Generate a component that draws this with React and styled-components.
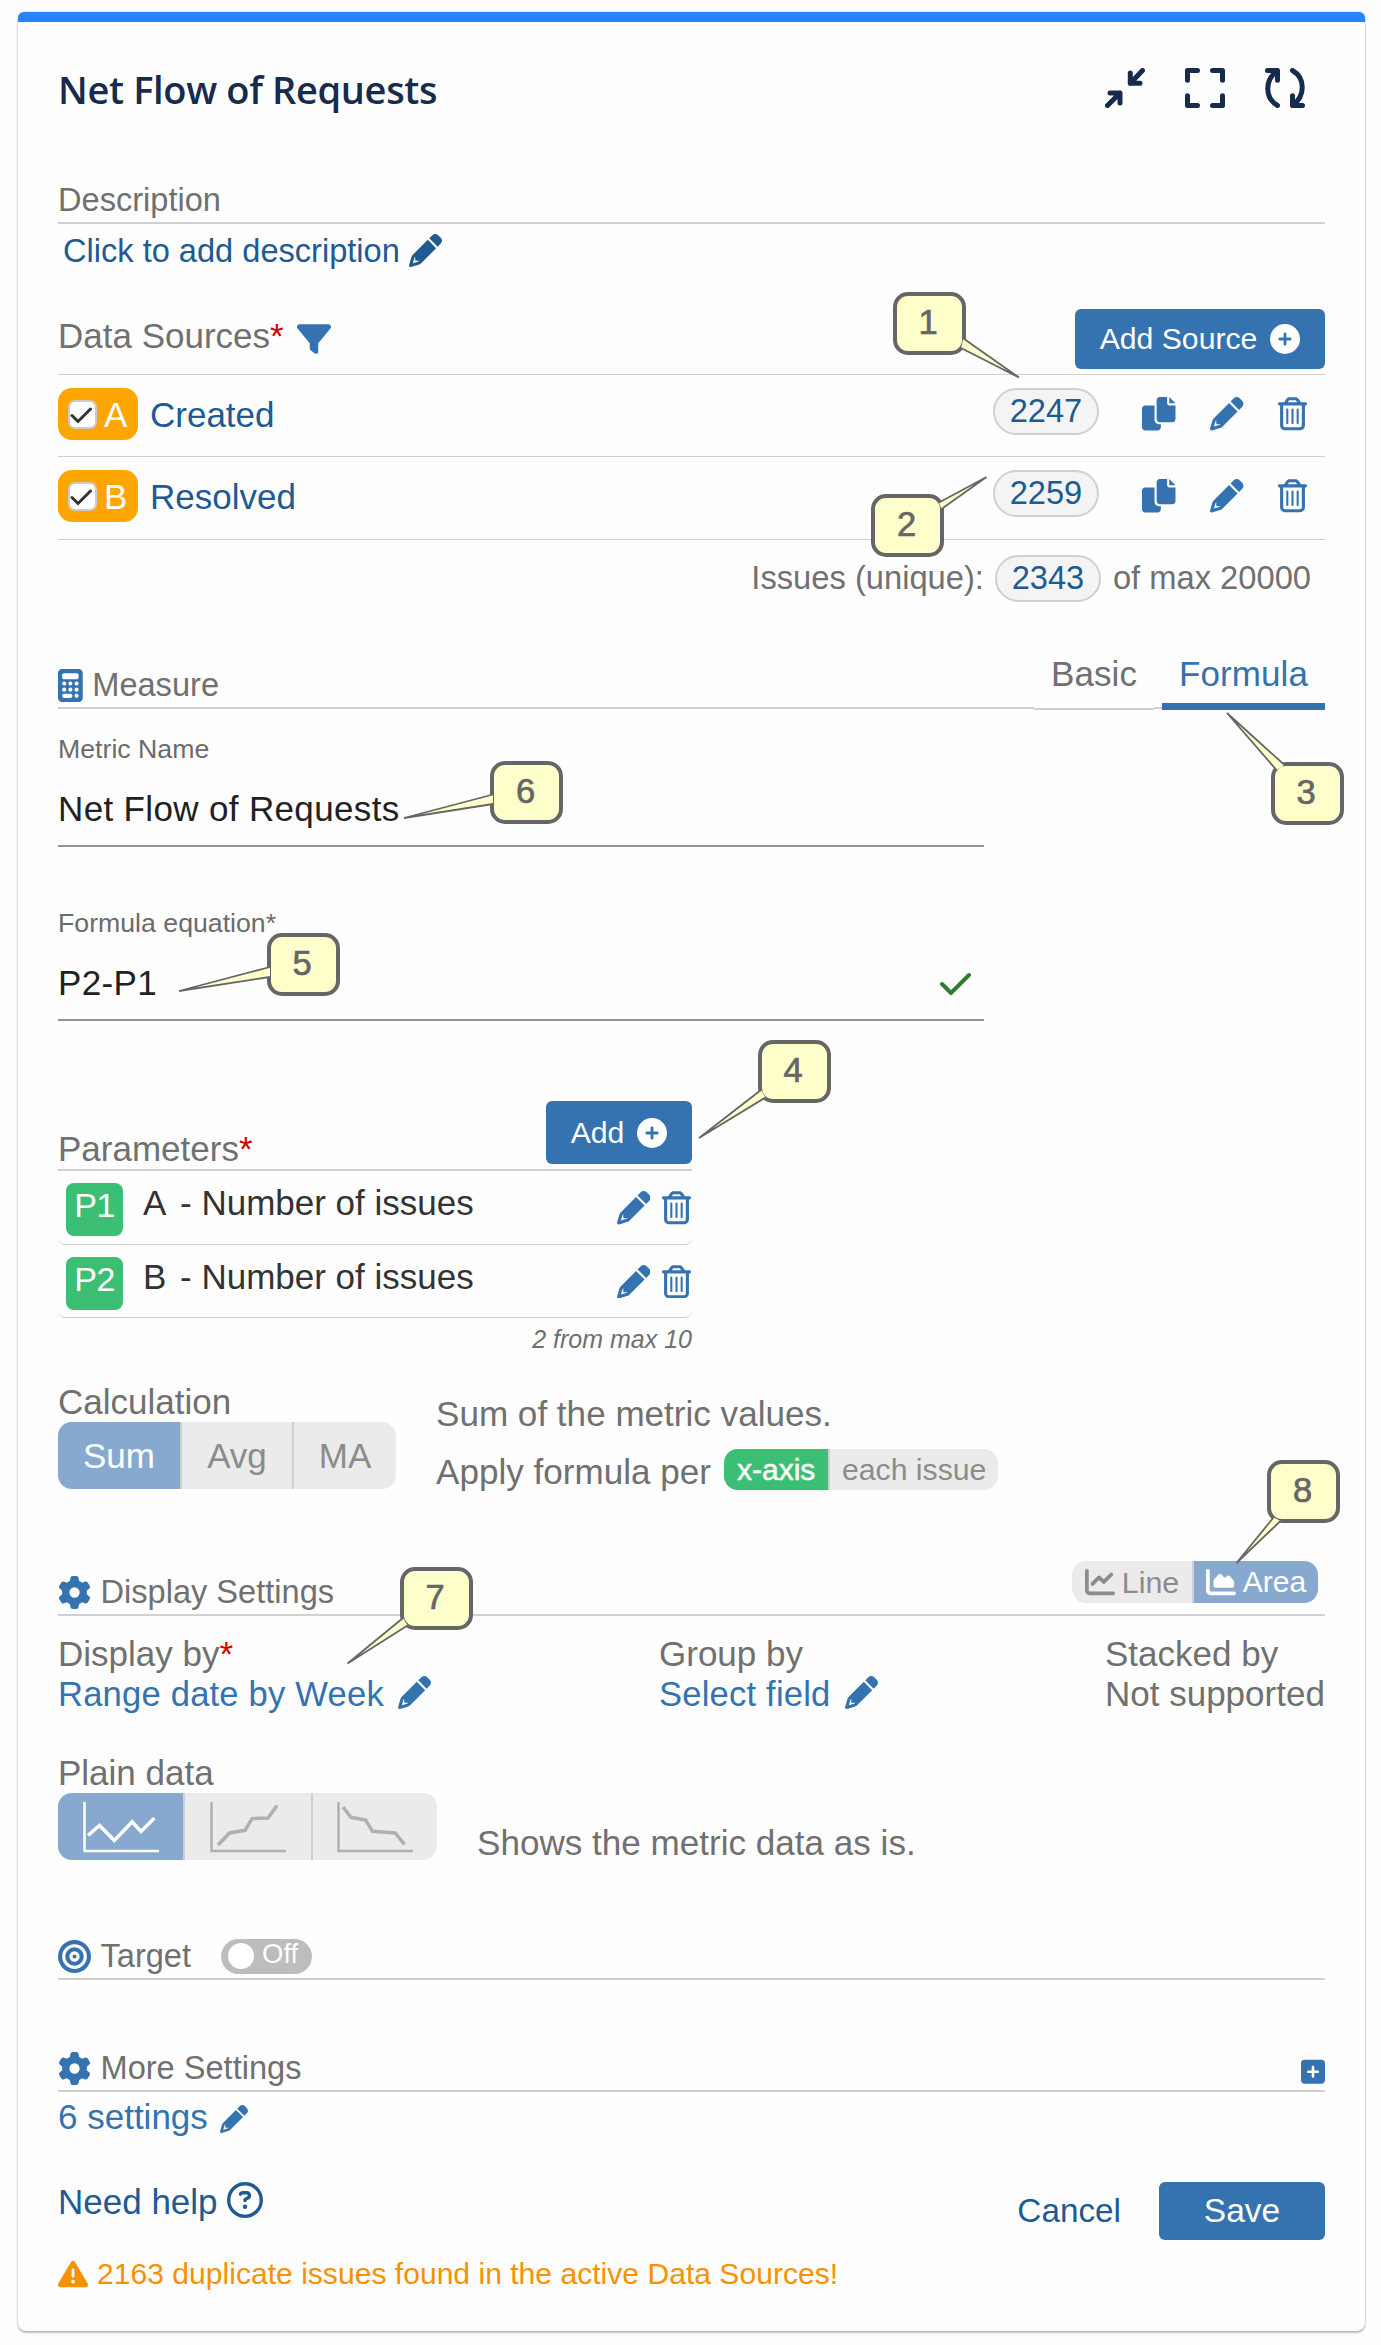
import React, { useState } from "react";
import styled, { createGlobalStyle, css } from "styled-components";
import {
  FaBullseye,
  FaCalculator,
  FaChartArea,
  FaChartLine,
  FaCirclePlus,
  FaFilter,
  FaGear,
  FaRegCircleQuestion,
  FaRegTrashCan,
  FaSquarePlus,
  FaTriangleExclamation,
} from "react-icons/fa6";

const GlobalStyle = createGlobalStyle`
  * {
    box-sizing: border-box;
  }

  body {
    margin: 0;
    background-color: #fefefe;
    font-family: "Liberation Sans", Arial, sans-serif;
    color: #707070;
  }

  svg {
    display: block;
    flex-shrink: 0;
  }
`;

const Page = styled.div`
  position: relative;
  width: 1381px;
  height: 2345px;
  padding: 12px 16px 0 18px;
  overflow: hidden;
`;

const Card = styled.div`
  height: 2319px;
  padding: 0 40px;
  border-top: 10px solid #2684ff;
  border-radius: 6px 6px 8px 8px;
  background-color: #fefefe;
  box-shadow: 0 2px 2px rgba(9, 30, 66, 0.25), 0 0 2px rgba(9, 30, 66, 0.31);
`;

const Header = styled.header`
  display: flex;
  align-items: center;
  justify-content: space-between;
  height: 131px;
`;

const Title = styled.h1`
  margin: 0;
  padding-top: 2px;
  font-family: "Open Sans", "Noto Sans", sans-serif;
  font-weight: 600;
  font-size: 38px;
  letter-spacing: -0.35px;
  color: #172b4d;
`;

const HeaderIcons = styled.div`
  display: flex;
  gap: 40px;
  padding-right: 20px;

  svg {
    width: 40px;
    height: 40px;
    fill: none;
    stroke: #172b4d;
    stroke-width: 5;
    stroke-linecap: round;
    stroke-linejoin: round;
  }
`;

const SectionHead = styled.div`
  display: flex;
  align-items: center;
  height: 46px;
  margin-top: ${(props) => props.$top || 0}px;
  border-bottom: 2px solid #d0d0d0;
  font-size: 32.6px;

  & > svg {
    margin-right: 9.5px;
    color: #3572b0;
  }
`;

const CalculatorIcon = styled(FaCalculator)`
  width: 24.75px;
  height: 33px;
`;

const ExpandIcon = styled(FaSquarePlus)`
  && {
    width: 24px;
    height: 27.5px;
    margin: 7px 0 0;
  }
`;

const TrashIcon = styled(FaRegTrashCan)`
  width: 29px;
  height: 33.5px;
`;

const Push = styled.div`
  flex: 1;
`;

const Label = styled.span`
  font-size: 35px;
  line-height: 40px;
  white-space: nowrap;

  em {
    font-style: normal;
    color: #d40000;
  }
`;

const DescriptionLink = styled.div`
  display: flex;
  align-items: center;
  gap: 9px;
  height: 53px;
  padding-left: 5px;
  font-size: 32.6px;
  color: #205a93;
`;

const SourcesHead = styled.div`
  display: flex;
  align-items: center;
  height: 98px;
  padding: 27px 0 0;
  border-bottom: 1px solid #d0d0d0;

  ${Label} {
    padding-bottom: 6px;
  }

  svg {
    color: #3572b0;
  }

  & > svg {
    margin-left: 13px;
  }
`;

const Button = styled.button`
  display: flex;
  align-items: center;
  justify-content: center;
  gap: 13px;
  width: ${(props) => props.$width}px;
  height: ${(props) => props.$height}px;
  padding: 0;
  border: 0;
  border-radius: 6px;
  background-color: #3572b0;
  color: #fff;
  font-family: inherit;
  font-size: ${(props) => props.$size || 30.2}px;

  && svg {
    color: #fff;
  }
`;

const SourceRow = styled.div`
  display: flex;
  align-items: flex-start;
  height: ${(props) => props.$height}px;
  padding-top: 13px;
  border-bottom: 1px solid #d0d0d0;
`;

const SourceBadge = styled.div`
  display: flex;
  align-items: center;
  gap: 7px;
  width: 80px;
  height: 52px;
  padding-left: 10px;
  border-radius: 14px;
  background-color: #ffa500;
  color: #fff;
  font-size: 35px;

  span {
    padding-top: 2px;
  }
`;

const CheckBox = styled.div`
  width: 29px;
  height: 29px;
  border: 2px solid #ccc;
  border-radius: 7px;
  background-color: #fff;

  svg {
    width: 25px;
    height: 25px;
    fill: none;
    stroke: #333;
    stroke-width: 3;
    stroke-linecap: round;
  }
`;

const SourceName = styled.div`
  flex: 1;
  padding-left: 12px;
  font-size: 35px;
  line-height: 53px;
  color: #205a93;
`;

const Pill = styled.div`
  width: 106px;
  height: 47px;
  border: 2px solid #d0d0d0;
  border-radius: 24px;
  background-color: #f4f4f4;
  color: #205a93;
  font-size: 32.6px;
  line-height: 41px;
  text-align: center;
`;

const RowIcons = styled.div`
  display: flex;
  gap: 34.5px;
  padding: 9px 18px 0 43px;
  color: #3572b0;
`;

const Total = styled.div`
  display: flex;
  justify-content: flex-end;
  height: 123px;
  padding: 15px 14px 0 0;
  font-size: 32.7px;
  line-height: 45px;

  ${Pill} {
    margin: 0 12px 0 11px;
  }
`;

const Tabs = styled.div`
  display: flex;
  align-self: flex-end;
  gap: 8px;
  margin-bottom: -3px;
`;

const Tab = styled.div`
  width: ${(props) => props.$width}px;
  height: 60px;
  border-bottom: 2px solid #d0d0d0;
  background-color: #fefefe;
  font-size: 35px;
  letter-spacing: 0.1px;
  line-height: 48px;
  text-align: center;

  ${(props) =>
    props.$active &&
    css`
      border-bottom: 7px solid #3572b0;
      color: #3572b0;
    `}
`;

const Field = styled.div`
  width: 926px;
  height: 138px;
  margin-top: ${(props) => props.$top || 0}px;
  padding-top: 25px;
  border-bottom: 2px solid #949494;
`;

const FieldLabel = styled.div`
  font-size: 26.7px;
  line-height: 30px;
  color: #6b6b6b;
`;

const FieldValue = styled.div`
  display: flex;
  align-items: center;
  justify-content: space-between;
  height: 72px;
  margin-top: 9px;
  padding-right: 13px;
  font-size: 35px;
  letter-spacing: 0.35px;
  color: #212121;
`;

const Params = styled.div`
  width: 634px;
`;

const ParamsHead = styled.div`
  display: flex;
  align-items: flex-end;
  justify-content: space-between;
  height: 150px;
  border-bottom: 2px solid #d0d0d0;

  ${Button} {
    margin-bottom: 5px;
  }
`;

const ParamRow = styled.div`
  display: flex;
  align-items: flex-start;
  height: 73.5px;
  padding: 12px 1px 0 8px;
  border-bottom: 1px solid #d0d0d0;
  border-radius: 0 0 7px 7px;
  font-size: 35px;
  line-height: 40px;
  color: #333;

  svg {
    margin-top: 8px;
    margin-left: 12px;
    color: #3572b0;
  }
`;

const ParamBadge = styled.div`
  width: 57px;
  height: 53px;
  border-radius: 8px;
  background-color: #3bbf74;
  color: #fff;
  font-size: 34px;
  letter-spacing: -0.5px;
  line-height: 44px;
  text-align: center;
`;

const ParamSource = styled.div`
  width: 37px;
  margin-left: 20px;
`;

const MaxNote = styled.div`
  height: 64px;
  font-size: 25px;
  font-style: italic;
  line-height: 43px;
  text-align: right;
`;

const Calculation = styled.div`
  display: flex;
  height: 188px;
`;

const Column = styled.div`
  display: flex;
  flex-direction: column;
  width: ${(props) => (props.$width ? props.$width + "px" : "auto")};
`;

const Group = styled.div`
  display: inline-flex;
  overflow: hidden;
  height: ${(props) => props.$height}px;
  border-radius: 14px;
  background-color: #ebebeb;
  color: #8c8c8c;
`;

const Segment = styled.div`
  display: flex;
  align-items: center;
  justify-content: center;
  gap: ${(props) => props.$gap || 0}px;
  width: ${(props) => props.$width}px;
  font-size: ${(props) => props.$size || 35}px;
  -webkit-text-stroke: ${(props) => (props.$bold ? "0.5px #fff" : "0")};

  & + & {
    border-left: 2px solid #d0d0d0;
  }

  ${(props) =>
    props.$active &&
    css`
      && {
        border-color: ${props.$active};
      }
      background-color: ${props.$active};
      color: #fff;
    `}
`;

const CalcText = styled.div`
  display: flex;
  align-items: center;
  height: 58px;
  font-size: 35.1px;
  white-space: nowrap;

  ${Group} {
    margin: -5px 0 0 13px;
  }
`;

const CalcTexts = styled.div`
  padding: 3px 0 0 40px;
`;

const ChartToggle = styled.div`
  align-self: flex-end;
  height: 42px;
  margin: 0 7px 11px 0;
`;

const FieldsRow = styled.div`
  display: flex;
  height: 98px;
  padding-top: 18px;
`;

const Value = styled.div`
  display: flex;
  align-items: center;
  gap: 14px;
  height: 40px;
  font-size: ${(props) => (props.$link ? 34.6 : 35)}px;
  letter-spacing: ${(props) => (props.$link ? 0.2 : 0)}px;
  white-space: nowrap;
  color: ${(props) => (props.$link ? "#3572b0" : "#707070")};

  svg {
    margin-top: -4px;
  }
`;

const PlainData = styled.div`
  display: flex;
  align-items: flex-end;
  height: 107px;
  margin-top: 39px;
`;

const PlainText = styled.div`
  padding-left: 40px;
  font-size: 35.1px;
  line-height: 34px;
`;

const MiniChart = styled.svg`
  width: 76px;
  height: 52px;
  fill: none;
  stroke: ${(props) => (props.$active ? "#fff" : "#b0b0b0")};
`;

const Switch = styled.div`
  display: flex;
  align-items: center;
  gap: 8px;
  width: 91px;
  height: 35px;
  margin-left: 30px;
  padding-left: 7px;
  border-radius: 18px;
  background-color: #bdbdbd;
  color: #fff;
  font-size: 27.5px;

  &::before {
    content: "";
    width: 26px;
    height: 26px;
    border-radius: 50%;
    background-color: #fff;
  }

  span {
    padding-bottom: 5px;
  }
`;

const MoreLink = styled.div`
  display: flex;
  align-items: center;
  gap: 12px;
  height: 49px;
  padding-top: 1px;
  font-size: 35px;
  color: #3572b0;

  svg {
    margin-top: 4px;
  }
`;

const Footer = styled.div`
  display: flex;
  align-items: flex-start;
  height: 58px;
  margin-top: 41px;
  color: #205a93;
  font-size: 35px;
  line-height: 40px;
`;

const HelpLink = styled.div`
  display: flex;
  gap: 9px;
`;

const Cancel = styled.div`
  margin-right: 38px;
  font-size: 33.3px;
  line-height: 57px;
`;

const Warning = styled.div`
  display: flex;
  align-items: center;
  gap: 9px;
  height: 40px;
  margin-top: 14px;
  font-size: 30.1px;
  color: #f79100;
`;

const CalloutBox = styled.div`
  position: absolute;
  left: ${(props) => props.$x}px;
  top: ${(props) => props.$y}px;
  width: 73px;
  height: 63px;
  padding-right: 2px;
  border: 4px solid #666;
  border-radius: 15px;
  background-color: #ffffcc;
  color: #666;
  font-size: 34.5px;
  line-height: 53px;
  text-align: center;
  -webkit-text-stroke: 0.7px #666;

  svg {
    position: absolute;
    left: -4px;
    top: -4px;
    width: 1px;
    height: 1px;
    overflow: visible;
  }
`;

const CopyIcon = ({ size }) => (
  <svg width={size} height={size} viewBox="0 0 512 512" fill="currentColor">
    <path d="M384 96V0H272c-26.5 0-48 21.5-48 48v288c0 26.5 21.5 48 48 48h192c26.5 0 48-21.5 48-48V128h-95.1C398.4 128 384 113.6 384 96zM416 0v96h96L416 0zM192 352V128H48c-26.5 0-48 21.5-48 48v288c0 26.5 21.5 48 48 48h192c26.5 0 48-21.5 48-48v-48h-32C220.7 416 192 387.3 192 352z" />
  </svg>
);

const PencilIcon = ({ size }) => (
  <svg width={size} height={size} viewBox="0 0 512 512" fill="currentColor">
    <path d="M421.7 220.3L188.5 453.4L154.6 419.5L158.1 416H112C103.2 416 96 408.8 96 400V353.9L92.5 357.4C87.8 362.2 84.3 368 82.4 374.4L59.4 452.6L137.6 429.6C144 427.7 149.8 424.2 154.6 419.5L188.5 453.4C178.1 463.8 165.2 471.5 151.1 475.6L30.8 511C22.400 513.500 13.200 511.200 7 504.900C.8 498.800-1.500 489.700 1 481.200L36.400 360.900C40.500 346.800 48.200 333.900 58.600 323.500L291.700 90.300L421.700 220.300zM492.700 58.700C517.700 83.700 517.700 124.300 492.700 149.300L444.300 197.700L314.300 67.700L362.700 19.300C387.700-5.700 428.300-5.700 453.300 19.300L492.700 58.700z" />
  </svg>
);

// p = [base1, base2, tip], relative to the top left corner of the box
const Callout = ({ n, x, y, p }) => (
  <CalloutBox $x={x} $y={y}>
    <svg>
      <path d={`M${p[0]} L${p[2]} L${p[1]}`} fill="#ffffcc" stroke="#666" strokeWidth="1.8" strokeLinejoin="bevel" />
    </svg>
    {n}
  </CalloutBox>
);

const sources = [
  { id: "A", name: "Created", count: 2247, height: 82 },
  { id: "B", name: "Resolved", count: 2259, height: 83 },
];

const params = [
  { id: "P1", source: "A", name: "Number of issues" },
  { id: "P2", source: "B", name: "Number of issues" },
];

const charts = [
  { width: 125, line: "5,34.5 16.5,24.5 31.3,39.5 49.2,20.8 58,30.5 71.5,17" },
  { width: 128, line: "8,44 19.5,32 35,29.3 42,17.7 58,17 67,4.5" },
  { width: 126, line: "6,6 14,16.3 28.7,19 35.5,30.3 58.2,32 67.5,43.5" },
];

const callouts = [
  { n: 1, x: 892.5, y: 291.5, p: ["70.5,46.5", "68,56", "126,85.5"] },
  { n: 2, x: 871, y: 493.5, p: ["68,8.5", "70.5,15", "115.5,-17"] },
  { n: 3, x: 1270.5, y: 761.5, p: ["5.5,8", "13.5,3", "-44,-49"] },
  { n: 4, x: 757.5, y: 1039.5, p: ["3,50", "7.5,57.5", "-59,98"] },
  { n: 5, x: 266.5, y: 933, p: ["3,34", "3,44", "-88,58"] },
  { n: 6, x: 490, y: 760.5, p: ["3,33.5", "3,43", "-86,57"] },
  { n: 7, x: 399.5, y: 1567, p: ["3,51", "7.5,58.5", "-52.5,96.5"] },
  { n: 8, x: 1267, y: 1459.5, p: ["6.5,57.5", "13.5,61", "-30.5,103"] },
];

const App = () => {
  const [tab, setTab] = useState("Formula");
  const [calc, setCalc] = useState("Sum");
  const [plain, setPlain] = useState(0);

  return (
    <Page>
      <GlobalStyle />
      <Card>
        <Header>
          <Title>Net Flow of Requests</Title>
          <HeaderIcons>
            <svg viewBox="0 0 40 40">
              <path d="M37.5 2.5L25.3 15.3M25.3 5V15.3H35M2.5 37.5L15 25M5 25H15V35" />
            </svg>
            <svg viewBox="0 0 40 40">
              <path d="M2.5 12.2V2.5H12.5M27.5 2.5H37.5V12.2M37.5 27.8V37.5H27.5M12.5 37.5H2.5V27.8" />
            </svg>
            <svg viewBox="0 0 40 40">
              <path d="M2.5 2.5H12.5V12.2M12.5 2.5C-0.5 12-0.5 30 12.5 37.5M27.5 2.5C40.5 10 40.5 28 27.5 37.5M27.5 27.8V37.5H37.5" />
            </svg>
          </HeaderIcons>
        </Header>

        <SectionHead $top={25}>Description</SectionHead>
        <DescriptionLink>
          Click to add description
          <PencilIcon size={33} />
        </DescriptionLink>

        <SourcesHead>
          <Label>
            Data Sources<em>*</em>
          </Label>
          <FaFilter size={34} />
          <Push />
          <Button $width={250} $height={60}>
            Add Source <FaCirclePlus size={30} />
          </Button>
        </SourcesHead>
        {sources.map((v) => (
          <SourceRow key={v.id} $height={v.height}>
            <SourceBadge>
              <CheckBox>
                <svg viewBox="0 0 25 25">
                  <path d="M2 13.5L8 19.5L20.5 7" />
                </svg>
              </CheckBox>
              <span>{v.id}</span>
            </SourceBadge>
            <SourceName>{v.name}</SourceName>
            <Pill>{v.count}</Pill>
            <RowIcons>
              <CopyIcon size={33.5} />
              <PencilIcon size={33.5} />
              <TrashIcon />
            </RowIcons>
          </SourceRow>
        ))}
        <Total>
          Issues (unique):
          <Pill>2343</Pill>
          of max 20000
        </Total>

        <SectionHead>
          <CalculatorIcon />
          Measure
          <Push />
          <Tabs>
            <Tab $width={120} $active={tab === "Basic"} onClick={() => setTab("Basic")}>
              Basic
            </Tab>
            <Tab $width={163} $active={tab === "Formula"} onClick={() => setTab("Formula")}>
              Formula
            </Tab>
          </Tabs>
        </SectionHead>

        <Field>
          <FieldLabel>Metric Name</FieldLabel>
          <FieldValue>Net Flow of Requests</FieldValue>
        </Field>
        <Field $top={36}>
          <FieldLabel>Formula equation*</FieldLabel>
          <FieldValue>
            P2-P1
            <svg width="31" height="23" viewBox="0 0 31 23" fill="none" stroke="#2e7d32" strokeWidth="4" strokeLinecap="round">
              <path d="M2 12L11 21L29 3" />
            </svg>
          </FieldValue>
        </Field>

        <Params>
          <ParamsHead>
            <Label>
              Parameters<em>*</em>
            </Label>
            <Button $width={146} $height={63}>
              Add <FaCirclePlus size={30} />
            </Button>
          </ParamsHead>
          {params.map((v) => (
            <ParamRow key={v.id}>
              <ParamBadge>{v.id}</ParamBadge>
              <ParamSource>{v.source}</ParamSource>
              <div>- {v.name}</div>
              <Push />
              <PencilIcon size={33.5} />
              <TrashIcon />
            </ParamRow>
          ))}
          <MaxNote>2 from max 10</MaxNote>
        </Params>

        <Calculation>
          <Column>
            <Label>Calculation</Label>
            <Group $height={67}>
              {["Sum", "Avg", "MA"].map((v, i) => (
                <Segment key={v} $width={[122, 112, 104][i]} $active={calc === v && "#87a9d0"} onClick={() => setCalc(v)}>
                  {v}
                </Segment>
              ))}
            </Group>
          </Column>
          <CalcTexts>
            <CalcText>Sum of the metric values.</CalcText>
            <CalcText>
              Apply formula per
              <Group $height={41}>
                <Segment $width={104.5} $size={30} $bold $active="#3bbf74">
                  x-axis
                </Segment>
                <Segment $width={169.5} $size={30.2}>
                  each issue
                </Segment>
              </Group>
            </CalcText>
          </CalcTexts>
        </Calculation>

        <SectionHead>
          <FaGear size={33} />
          Display Settings
          <Push />
          <ChartToggle>
            <Group $height={42}>
              <Segment $width={120} $size={30.4} $gap={7}>
                <FaChartLine size={30} />
                Line
              </Segment>
              <Segment $width={126} $size={30} $gap={7} $active="#87a9d0">
                <FaChartArea size={30} />
                Area
              </Segment>
            </Group>
          </ChartToggle>
        </SectionHead>

        <FieldsRow>
          <Column $width={601}>
            <Label>
              Display by<em>*</em>
            </Label>
            <Value $link>
              Range date by Week
              <PencilIcon size={33} />
            </Value>
          </Column>
          <Column $width={446}>
            <Label>Group by</Label>
            <Value $link>
              Select field
              <PencilIcon size={33} />
            </Value>
          </Column>
          <Column>
            <Label>Stacked by</Label>
            <Value>Not supported</Value>
          </Column>
        </FieldsRow>

        <PlainData>
          <Column>
            <Label>Plain data</Label>
            <Group $height={67}>
              {charts.map((v, i) => (
                <Segment key={i} $width={v.width} $active={plain === i && "#87a9d0"} onClick={() => setPlain(i)}>
                  <MiniChart viewBox="0 0 76 52" $active={plain === i}>
                    <path d="M1.5 1V50H76" strokeWidth="2.5" />
                    <polyline points={v.line} strokeWidth="3.5" />
                  </MiniChart>
                </Segment>
              ))}
            </Group>
          </Column>
          <PlainText>Shows the metric data as is.</PlainText>
        </PlainData>

        <SectionHead $top={74}>
          <FaBullseye size={33} />
          Target
          <Switch>
            <span>Off</span>
          </Switch>
        </SectionHead>

        <SectionHead $top={66}>
          <FaGear size={33} />
          More Settings
          <Push />
          <ExpandIcon />
        </SectionHead>
        <MoreLink>
          6 settings
          <PencilIcon size={28} />
        </MoreLink>

        <Footer>
          <HelpLink>
            Need help
            <FaRegCircleQuestion size={36} />
          </HelpLink>
          <Push />
          <Cancel>Cancel</Cancel>
          <Button $width={166} $height={58} $size={33.5}>
            Save
          </Button>
        </Footer>

        <Warning>
          <FaTriangleExclamation size={30} />
          2163 duplicate issues found in the active Data Sources!
        </Warning>
      </Card>

      {callouts.map((v) => (
        <Callout key={v.n} {...v} />
      ))}
    </Page>
  );
};

export default App;
